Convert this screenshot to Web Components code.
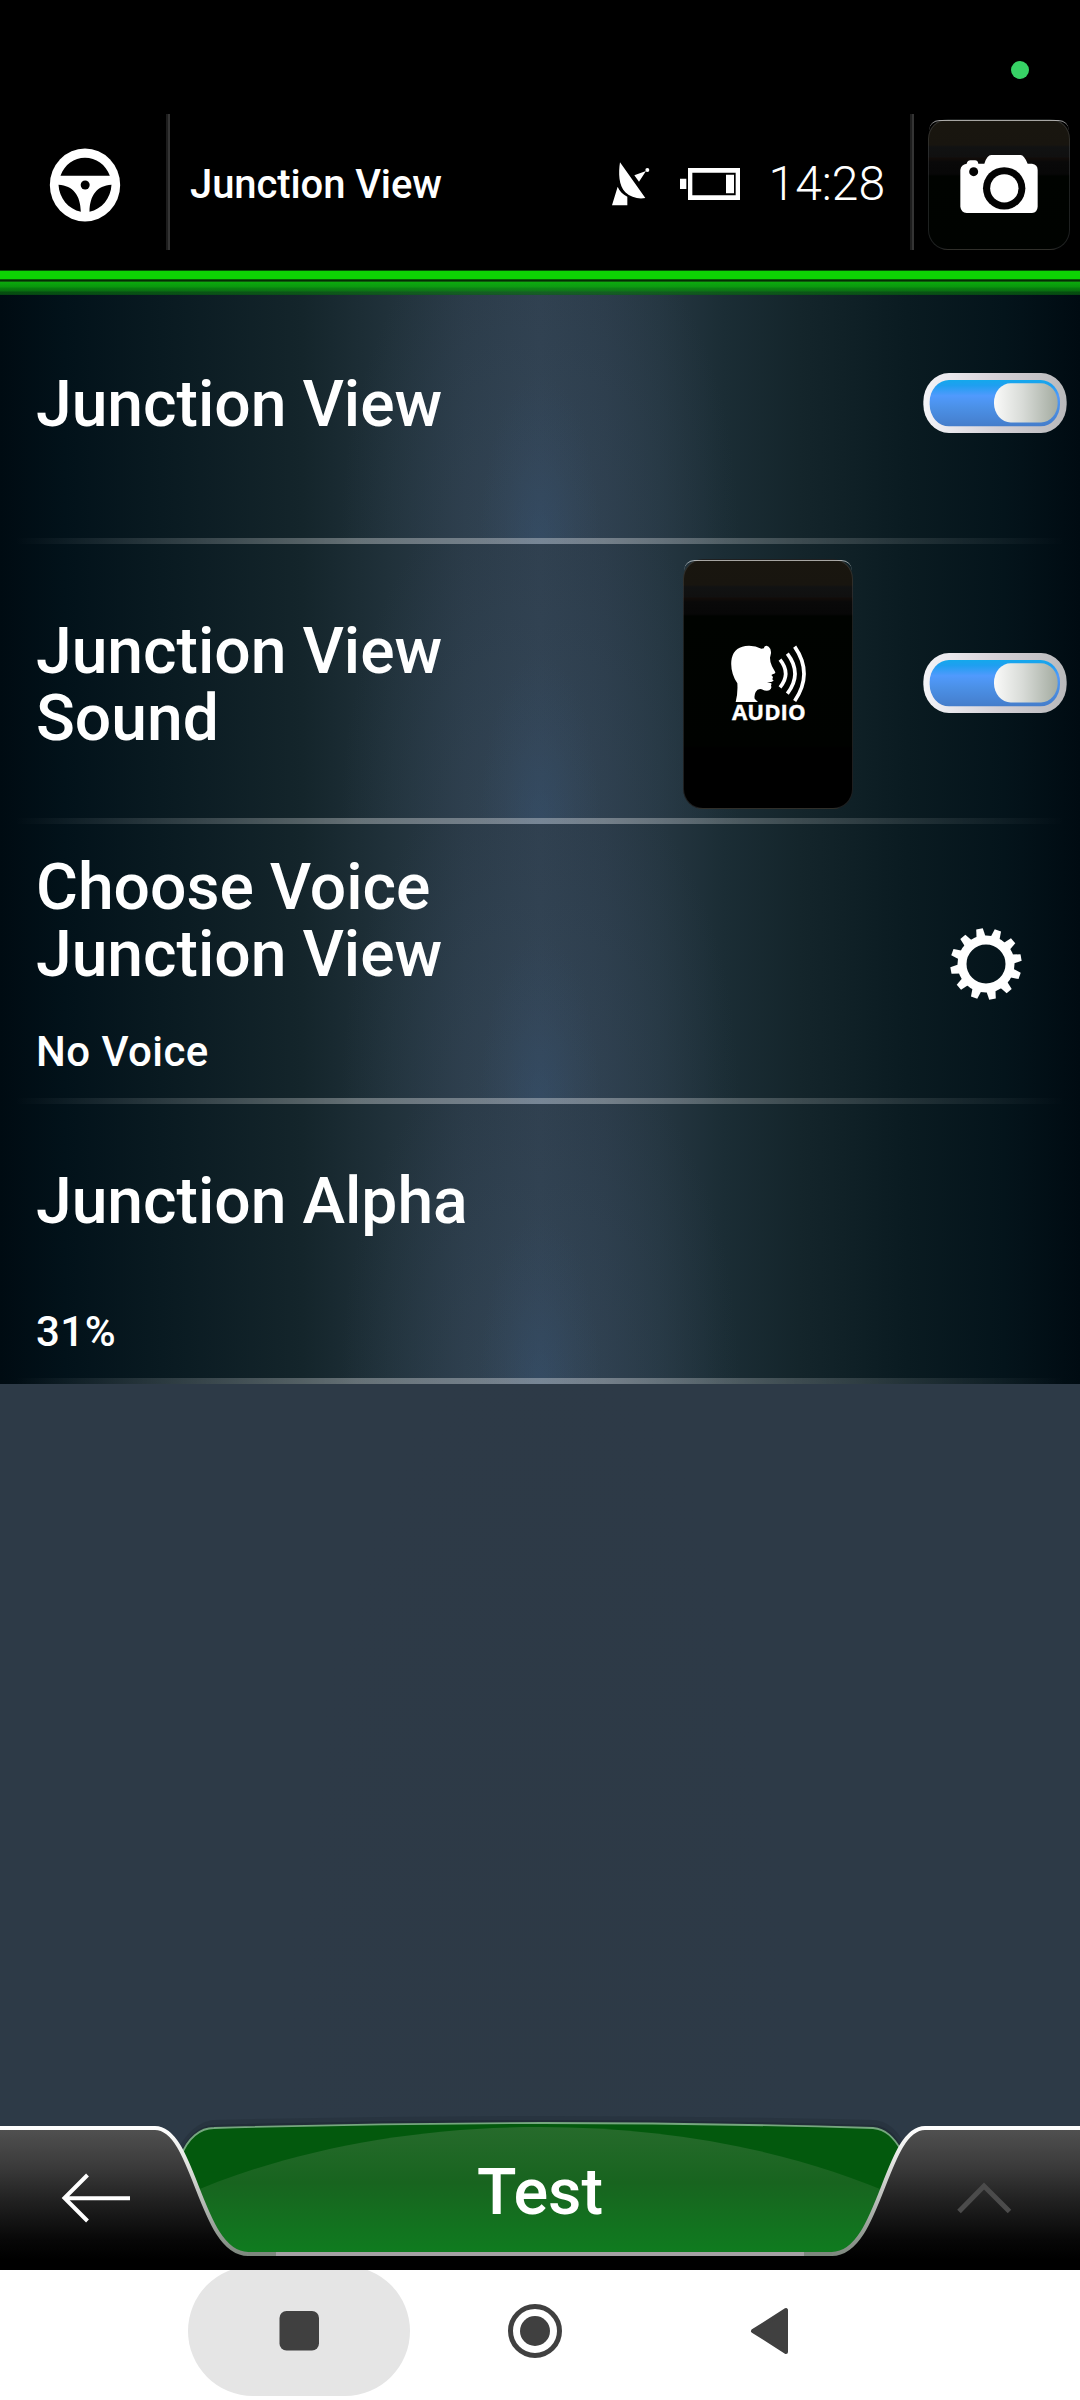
<!DOCTYPE html>
<html lang="en">
<head>
<meta charset="utf-8">
<title>Junction View</title>
<style>
html,body{margin:0;padding:0;background:#000}
body{width:1080px;height:2400px;overflow:hidden;font-family:Roboto,"Liberation Sans",sans-serif;color:#fff}
</style>
</head>
<body>
<settings-screen></settings-screen>
<script>
function define(name, html){
  const t=document.createElement('template');
  t.innerHTML=html;
  customElements.define(name, class extends HTMLElement{
    constructor(){super();this.attachShadow({mode:'open'}).append(t.content.cloneNode(true));}
  });
}

define('wheel-icon',`<style>:host{display:block;width:72px;height:74px}svg{display:block}</style>
<svg width="72" height="74" viewBox="57.5 127 216 222">
<ellipse cx="165.5" cy="238" rx="105.5" ry="109.5" fill="#fff"/>
<path fill="#000" d="M92 210C104 176 133 156 165.500 156S228 176 240 210ZM86 237C130 240 152 268 153 318C116 310 88 278 86 237ZM245 237C201 240 180 268 179 318C216 310 243 278 245 237Z"/>
<circle cx="166" cy="238" r="13.500" fill="#000"/></svg>`);

define('satellite-icon',`<style>:host{display:block;width:40px;height:44px}svg{display:block}</style>
<svg width="40" height="44" viewBox="33 157 120 132" fill="#fff">
<path d="M60 158L136 265C115 269 92 263 76 248C56 228 55 190 60 158ZM36 287L53 231C58 244 68 254 82 261V287ZM103 197L138 184L117 216Z"/><circle cx="142" cy="181" r="6"/></svg>`);

define('battery-icon',`<style>:host{display:block;width:60px;height:32px}svg{display:block}</style>
<svg width="60" height="32" viewBox="240 174 180 96"><path fill="#fff" d="M240 206h19v31h-19zM378 194h24v56h-24z"/>
<path fill="#fff" fill-rule="evenodd" d="M264 174h156v96H264ZM277 188v68h130v-68Z"/></svg>`);

define('camera-icon',`<style>:host{display:block;width:78px;height:58px}svg{display:block}</style>
<svg width="78" height="58" viewBox="1080 135 234 174">
<path fill="#fff" d="M1100 161Q1103 151 1111 151H1125Q1133 151 1135 161H1153Q1161 135 1174 135H1262Q1272 135 1283 161H1296Q1313 163 1313 180V290Q1312 307 1296 309H1100Q1083 307 1081 290V180Q1083 163 1100 161Z"/>
<circle cx="1121" cy="185" r="13.500" fill="#030303"/><circle cx="1212.500" cy="235" r="63.500" fill="#030303"/><circle cx="1213" cy="235" r="42.500" fill="#fff"/></svg>`);

define('audio-icon',`<style>:host{display:flex;flex-direction:column;width:75px;height:77px}svg{display:block;overflow:visible}</style>
<svg width="75" height="77" viewBox="212 316 225 231">
<path fill="#fff" d="M226 487Q233 461 231 431Q210 399 213 364Q217 325 255 319Q282 316 303 327L311 326Q311 318 319 318L325 321Q333 327 332 341L329 354Q329 369 335 380L345 398Q346 402 337 404L333 406L338 412L336 419L340 423L333 427L320 428L333 431Q334 434 332 438Q336 446 327 452Q318 456 304 449Q292 446 286 457Q281 467 283 477L293 487Z"/>
<g fill="none" stroke="#fff" stroke-width="11"><path d="M359 360Q393 402 359 443"/><path d="M381 342Q427 402 381 462"/><path d="M403 321Q459 402 403 484"/></g>
<text x="215" y="542" textLength="221" lengthAdjust="spacingAndGlyphs" font-family="'Open Sans',sans-serif" font-weight="700" font-size="65" fill="#fff" stroke="#fff" stroke-width="1">AUDIO</text></svg>`);

define('gear-icon',`<style>:host{display:block;width:72px;height:72px}svg{display:block}</style>
<svg width="72" height="72" viewBox="-108 -108 216 216">
<defs><path id="t" d="M-14 -80L-10 -107H10L14 -80Z"/></defs>
<circle r="72" fill="none" stroke="#fff" stroke-width="27"/><g id="teeth" fill="#fff" transform="rotate(-10.500)">
${Array.from({length:12},(_,i)=>`<use href="#t" transform="rotate(${i*30})"/>`).join('')}</g></svg>`);

define('toggle-switch',`<style>:host{display:block;width:144px;height:60px}svg{display:block}</style>
<svg width="144" height="60" viewBox="69 98.500 432 180">
<defs><linearGradient id="o" x2="1" y2="0"><stop offset="0" stop-color="#f4f4f8"/><stop offset=".5" stop-color="#d6d2d8"/><stop offset="1" stop-color="#b9b9bb"/></linearGradient>
<linearGradient id="b" x2="0" y2="1"><stop offset="0" stop-color="#14a8ec"/><stop offset=".12" stop-color="#1f9ff0"/><stop offset=".34" stop-color="#509afd"/><stop offset=".6" stop-color="#4b90e6"/><stop offset="1" stop-color="#457dcb"/></linearGradient>
<linearGradient id="k" x2="1" y2="0"><stop offset="0" stop-color="#fafaf9"/><stop offset=".45" stop-color="#d8dbd7"/><stop offset="1" stop-color="#a3aba0"/></linearGradient></defs>
<rect x="70" y="98.500" width="430" height="180" rx="77" ry="86" fill="url(#o)"/>
<rect x="89" y="119.500" width="391" height="139" rx="58" ry="66" fill="url(#b)"/>
<rect x="282" y="129" width="191" height="118" rx="50" ry="58" fill="url(#k)"/></svg>`);

define('glossy-button',`<style>:host{display:flex;align-items:center;justify-content:center;box-sizing:border-box;border-radius:20px;border:1.5px solid rgba(110,115,120,.27);
background:linear-gradient(#19160f 0,#18150f 25px,#111212 27px,#101010 37px,#120c09 38px,#090909 42px,#070707 54px,#000300 56px,#000200 186px,#000 188px);position:relative}
:host::before{content:"";position:absolute;inset:0;border-radius:19px;border-top:1px solid rgba(255,255,255,.62);height:20px;pointer-events:none}</style><slot></slot>`);

define('top-bar',`<style>:host{display:block;height:295px;margin-bottom:-31px;position:relative;z-index:1}
.status{height:114px;background:#000;display:flex;justify-content:flex-end;align-items:flex-start;padding:61px 51px 0 0;box-sizing:border-box}
.status i{width:18px;height:18px;border-radius:50%;background:#37d266}
.main{height:156px;background:#000;display:flex;align-items:flex-start}
.d{width:4px;height:136px;background:linear-gradient(90deg,#1d1d1d 50%,#343434 50%)}
.w{width:166px;height:136px;padding:34px 0 0 49px;box-sizing:border-box}
.t{font-weight:500;font-size:40px;letter-spacing:-.1px;line-height:46px;padding:48px 0 0 20px;width:421px;white-space:nowrap}
.s{flex:1;display:flex;align-items:flex-start}
satellite-icon{margin-top:48px}battery-icon{margin:54px 0 0 29px}
.c{font-weight:300;font-size:48px;line-height:56px;margin:42px 0 0 28.500px;white-space:nowrap}
glossy-button{width:142px;height:131px;margin:5px 10px 0 14px}
camera-icon{margin-top:-1px}
.g{height:25px;background:linear-gradient(#074d05 0 1px,#0dd204 1px 9px,#0a8a06 9px,#052e04 10px 11px,#0e5a0d 11px 12px,rgba(12,176,12,.96) 12px,rgba(10,164,12,.9) 17px,rgba(8,145,12,.88) 18px,rgba(10,130,14,.82) 21px,rgba(8,110,14,.66) 22px 24px,rgba(8,90,20,.6))}
</style>
<div class="status"><i></i></div>
<div class="main"><div class="w"><wheel-icon></wheel-icon></div><div class="d"></div><div class="t"><slot name="title"></slot></div>
<div class="s"><satellite-icon></satellite-icon><battery-icon></battery-icon><div class="c"><slot name="time"></slot></div></div>
<div class="d"></div><glossy-button><camera-icon></camera-icon></glossy-button></div><div class="g"></div>`);

define('setting-row',`<style>:host{display:flex;align-items:center;box-sizing:border-box;height:280px;padding:0 13px 2px 36px;
background:linear-gradient(90deg,transparent 15px,rgba(255,255,255,.32) 33%,rgba(255,255,255,.33) 56%,rgba(255,255,255,.19) 72%,transparent 1065px) bottom/100% 6px no-repeat,
radial-gradient(ellipse 60px 170px at 50% 100%,rgba(55,84,118,.38),rgba(55,82,112,.14) 60%,transparent),
radial-gradient(ellipse 200px 360px at 50% 100%,rgba(60,82,103,.36),transparent),
linear-gradient(90deg,#000b12 0,#02121a 6%,#091a21 15%,#14252b 28%,#20313a 36%,#2a3a47 43%,#2f3f4e 50%,#2b3b49 56%,#253641 61%,#1b2d35 67%,#14252b 74%,#0a1b21 84%,#04141b 93%,#000b12 100%)}
.l{flex:1;display:flex;flex-direction:column;height:278px}
.t{flex:1;display:flex;align-items:center;font-weight:500;font-size:64.200px;line-height:67px;max-width:560px;padding-top:2px}
.s ::slotted(*){display:block;box-sizing:border-box;height:86px;padding-top:11px;font-weight:500;font-size:42px;letter-spacing:.450px;line-height:50px}
:host(.plain) .t{padding-top:3px}
::slotted(glossy-button){width:170px;height:250px;margin:1px 70px 0 0}
::slotted(gear-icon){margin-right:45px;margin-top:1px}
</style><div class="l"><div class="t"><span><slot></slot></span></div><div class="s"><slot name="value"></slot></div></div><slot name="control"></slot>`);

define('action-bar',`<style>:host{display:block;position:relative;height:154px}
svg.bg{position:absolute;left:0;top:0}
.r{position:relative;display:flex;height:154px;align-items:flex-start}
.b{width:200px;padding:57px 0 0 61px;box-sizing:border-box}.m{flex:1;text-align:center;font-weight:500;font-size:64.800px;line-height:75px;padding-top:39px}
.u{width:200px;padding:65px 0 0 76px;box-sizing:border-box}.r svg{display:block}</style>
<svg class="bg" width="1080" height="154" viewBox="0 2116 1080 154">
<defs><linearGradient id="k" gradientUnits="userSpaceOnUse" x1="0" y1="2128" x2="0" y2="2260"><stop offset="0" stop-color="#515151"/><stop offset=".3" stop-color="#3a3a3a"/><stop offset=".55" stop-color="#212121"/><stop offset=".85" stop-color="#070707"/><stop offset="1" stop-color="#000"/></linearGradient>
<linearGradient id="e" gradientUnits="userSpaceOnUse" x1="0" y1="2128" x2="0" y2="2256"><stop offset="0" stop-color="#fff"/><stop offset=".3" stop-color="#dfe0dd"/><stop offset=".7" stop-color="#a5aaa5"/><stop offset="1" stop-color="#7d877d"/></linearGradient>
<linearGradient id="g" gradientUnits="userSpaceOnUse" x1="0" y1="2124" x2="0" y2="2254"><stop offset="0" stop-color="#276b2c"/><stop offset=".45" stop-color="#18641f"/><stop offset="1" stop-color="#0f7c1f"/></linearGradient>
<clipPath id="c"><path d="M181 2156C188 2138 200 2128 214 2128Q540 2118 873 2128C886 2129 894 2138 900 2150V2255H181Z"/></clipPath></defs>
<path d="M175 2156C184 2133 200 2121 214 2120Q540 2112 873 2120C890 2121 900 2133 907 2150Z" fill="#1f2a35" opacity=".35"/>
<path d="M179 2156C187 2136 200 2125 214 2125Q540 2115 873 2125C888 2126 897 2137 904 2150Z" fill="#1b2530" opacity=".5"/>
<path d="M0 2254H1080V2270H0Z" fill="#000"/>
<g clip-path="url(#c)"><rect x="170" y="2116" width="750" height="142" fill="#03590d"/>
<path d="M150 2212C260 2155 400 2127 540 2127S820 2155 930 2212V2260H150Z" fill="url(#g)"/></g>
<path d="M181 2156C188 2138 200 2128 214 2128Q540 2118 873 2128C886 2129 894 2138 901 2150" fill="none" stroke="#76a77f" stroke-width="1.800"/>
<path d="M0 2128H155C195 2128 200 2254 248 2254V2270H0ZM1080 2128H925C885 2128 880 2254 832 2254V2270H1080Z" fill="url(#k)"/>
<path d="M248 2254H832" stroke="#7d877d" stroke-width="4"/><path d="M276 2254H804" stroke="#a4a0a3" stroke-width="4"/>
<path d="M0 2128H155C195 2128 200 2254 248 2254M1080 2128H925C885 2128 880 2254 832 2254" fill="none" stroke="url(#e)" stroke-width="4"/></svg>
<div class="r"><div class="b"><svg width="72" height="52" viewBox="61 2173 72 52" fill="none" stroke="#fff" stroke-width="4"><path d="M130 2198.200H65M87.500 2175L64.500 2198L87.500 2221"/></svg></div>
<div class="m"><slot></slot></div>
<div class="u"><svg width="58" height="36" viewBox="956 2181 58 36" fill="none" stroke="#4b4b4b" stroke-width="5"><path d="M959 2211.500L984 2186L1009.500 2211.500"/></svg></div></div>`);

define('system-nav',`<style>:host{display:block;height:130px;background:#fff;overflow:hidden}svg{display:block}</style>
<svg width="1080" height="130" viewBox="0 2270 1080 130"><rect x="188" y="2266" width="222" height="130" rx="65" fill="#e5e5e5"/>
<g fill="#404040"><rect x="279.500" y="2311" width="39.500" height="39.500" rx="7"/><circle cx="535" cy="2331" r="15"/>
<path d="M753 2331L786 2310V2352Z" stroke="#404040" stroke-width="4" stroke-linejoin="round"/></g>
<circle cx="535" cy="2331" r="24.500" fill="none" stroke="#404040" stroke-width="5"/></svg>`);

define('settings-screen',`<style>:host{display:flex;flex-direction:column;width:1080px;height:2400px;background:#2d3a47}
main{flex:1;background:radial-gradient(ellipse 260px 800px at 50% 1850px,rgba(45,57,68,.35),transparent)}</style>
<top-bar><span slot="title">Junction View</span><span slot="time">14:28</span></top-bar>
<main>
<setting-row class="plain">Junction View<toggle-switch slot="control"></toggle-switch></setting-row>
<setting-row class="plain">Junction View Sound<glossy-button slot="control"><audio-icon></audio-icon></glossy-button><toggle-switch slot="control"></toggle-switch></setting-row>
<setting-row>Choose Voice Junction View<span slot="value">No Voice</span><gear-icon slot="control"></gear-icon></setting-row>
<setting-row>Junction Alpha<span slot="value">31%</span></setting-row>
</main>
<action-bar>Test</action-bar>
<system-nav></system-nav>`);
</script>
</body>
</html>
